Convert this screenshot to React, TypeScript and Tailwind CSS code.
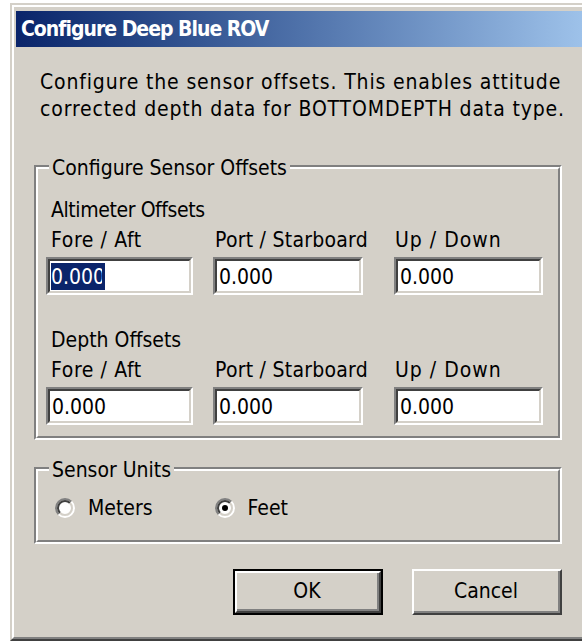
import React from "react";

const ui = "[font-family:'DejaVu_Sans_Condensed','DejaVu_Sans',sans-serif]";

function Legend({ children }: { children: React.ReactNode }) {
  return (
    <span className="absolute left-[13px] top-[-11px] bg-[#d4d0c8] px-[3px] text-[21px] leading-[24px] text-black">
      {children}
    </span>
  );
}

function GroupBox({
  title,
  className,
  children,
}: {
  title: string;
  className: string;
  children: React.ReactNode;
}) {
  return (
    <div
      className={`relative w-[528px] border-2 border-t-[#808080] border-l-[#808080] border-r-white border-b-white ${className}`}
    >
      <div className="border-2 border-t-white border-l-white border-r-[#808080] border-b-[#808080]">
        {children}
      </div>
      <Legend>{title}</Legend>
    </div>
  );
}

function Edit({
  width,
  selected = false,
}: {
  width: string;
  selected?: boolean;
}) {
  return (
    <div
      className={`${width} h-[38px] border-2 border-t-[#808080] border-l-[#808080] border-r-white border-b-white`}
    >
      <div className="h-full border-2 border-t-[#404040] border-l-[#404040] border-r-[#d4d0c8] border-b-[#d4d0c8] bg-white pl-[1px] pt-[2px]">
        {selected ? (
          <span className="inline-flex h-[27px] items-center bg-[#0a246a] pt-[2px] text-[21px] leading-[25px] text-white">
            0.000
            <span className="-ml-[3px] inline-block h-[25px] w-[3px] bg-[#0a246a]" />
          </span>
        ) : (
          <span className="inline-block h-[27px] pl-[1px] pt-[2px] text-[21px] leading-[25px] text-black">
            0.000
          </span>
        )}
      </div>
    </div>
  );
}

function OffsetBlock({
  heading,
  headingTrack,
  first,
  focused = false,
}: {
  heading: string;
  headingTrack: string;
  first: boolean;
  focused?: boolean;
}) {
  return (
    <div className={first ? "" : "mt-[33px]"}>
      <div className={`ml-[5px] h-[24px] text-[21px] leading-[24px] ${headingTrack}`}>{heading}</div>
      <div className="mt-[6px] flex h-[24px] text-[21px] leading-[24px]">
        <div className="w-[167px] pl-[5px] tracking-[0.6px]">Fore / Aft</div>
        <div className="w-[181px] pl-[2px] tracking-[0.25px]">Port / Starboard</div>
        <div className="pl-[1px] tracking-[1px]">Up / Down</div>
      </div>
      <div className="mt-[5px] flex">
        <Edit width="w-[147px]" selected={focused} />
        <div className="ml-[20px]">
          <Edit width="w-[150px]" />
        </div>
        <div className="ml-[31px]">
          <Edit width="w-[149px]" />
        </div>
      </div>
    </div>
  );
}

function Radio({ checked }: { checked: boolean }) {
  const r1 = 9;
  const r2 = 7;
  const pt = (r: number, sx: number, sy: number) =>
    `${10 + sx * r * 0.7071} ${10 + sy * r * 0.7071}`;
  return (
    <svg width="20" height="20" viewBox="0 0 20 20" className="block">
      <circle cx="10" cy="10" r="8" fill="white" />
      <path
        d={`M ${pt(r1, -1, 1)} A ${r1} ${r1} 0 0 1 ${pt(r1, 1, -1)}`}
        fill="none"
        stroke="#808080"
        strokeWidth="2"
      />
      <path
        d={`M ${pt(r1, 1, -1)} A ${r1} ${r1} 0 0 1 ${pt(r1, -1, 1)}`}
        fill="none"
        stroke="#ffffff"
        strokeWidth="2"
      />
      <path
        d={`M ${pt(r2, -1, 1)} A ${r2} ${r2} 0 0 1 ${pt(r2, 1, -1)}`}
        fill="none"
        stroke="#404040"
        strokeWidth="2"
      />
      <path
        d={`M ${pt(r2, 1, -1)} A ${r2} ${r2} 0 0 1 ${pt(r2, -1, 1)}`}
        fill="none"
        stroke="#d4d0c8"
        strokeWidth="2"
      />
      {checked && <circle cx="10" cy="10" r="3" fill="black" />}
    </svg>
  );
}

function Button({
  label,
  isDefault = false,
}: {
  label: string;
  isDefault?: boolean;
}) {
  const face = (
    <div className="h-full border-2 border-t-white border-l-white border-r-[#404040] border-b-[#404040]">
      <div className="flex h-full items-center justify-center border-r-2 border-b-2 border-r-[#808080] border-b-[#808080] text-[21px] leading-[24px] text-black">
        {label}
      </div>
    </div>
  );
  return isDefault ? (
    <div className="h-[46px] w-[150px] border-2 border-black">{face}</div>
  ) : (
    <div className="h-[46px] w-[150px]">{face}</div>
  );
}

export default function App() {
  return (
    <div className={`h-[641px] w-[582px] overflow-hidden bg-white pl-[10px] pt-[3px] text-black ${ui}`}>
      <div className="flex h-[638px] w-[600px] flex-col border-t-2 border-l-2 border-b-2 border-t-[#d4d0c8] border-l-[#d4d0c8] border-b-[#404040] bg-[#d4d0c8]">
        <div className="flex flex-1 flex-col border-t-2 border-l-2 border-b-2 border-t-white border-l-white border-b-[#808080]">
          <div className="flex flex-1 flex-col pl-[2px] pt-[4px]">
            {/* caption bar */}
            <div className="flex h-[36px] items-center bg-gradient-to-r from-[#0a246a] to-[#a6caf0] pl-[5px]">
              <span className="text-[21px] font-bold leading-[24px] tracking-[-1px] text-white">
                Configure Deep Blue ROV
              </span>
            </div>

            {/* dialog body */}
            <div className="flex flex-col">
              <p className="ml-[24px] mt-[22px] text-[21px] leading-[27px] tracking-[0.85px]">
                Configure the sensor offsets. This enables attitude
                <br />
                corrected depth data for BOTTOMDEPTH data type.
              </p>

              <GroupBox title="Configure Sensor Offsets" className="ml-[18px] mt-[42px]">
                <div className="pb-[11px] pl-[8px] pt-[29px]">
                  <OffsetBlock
                    heading="Altimeter Offsets"
                    headingTrack="tracking-[-0.4px]"
                    first
                    focused
                  />
                  <OffsetBlock heading="Depth Offsets" headingTrack="" first={false} />
                </div>
              </GroupBox>

              <GroupBox title="Sensor Units" className="ml-[18px] mt-[27px]">
                <div className="flex h-[69px] items-start pl-[17px] pt-[25px] text-[21px] leading-[24px]">
                  <label className="flex items-center">
                    <Radio checked={false} />
                    <span className="ml-[13px]">Meters</span>
                  </label>
                  <label className="ml-[62px] flex items-center">
                    <Radio checked />
                    <span className="ml-[13px]">Feet</span>
                  </label>
                </div>
              </GroupBox>

              <div className="ml-[217px] mt-[25px] flex gap-[29px]">
                <Button label="OK" isDefault />
                <Button label="Cancel" />
              </div>
            </div>
          </div>
        </div>
      </div>
    </div>
  );
}
